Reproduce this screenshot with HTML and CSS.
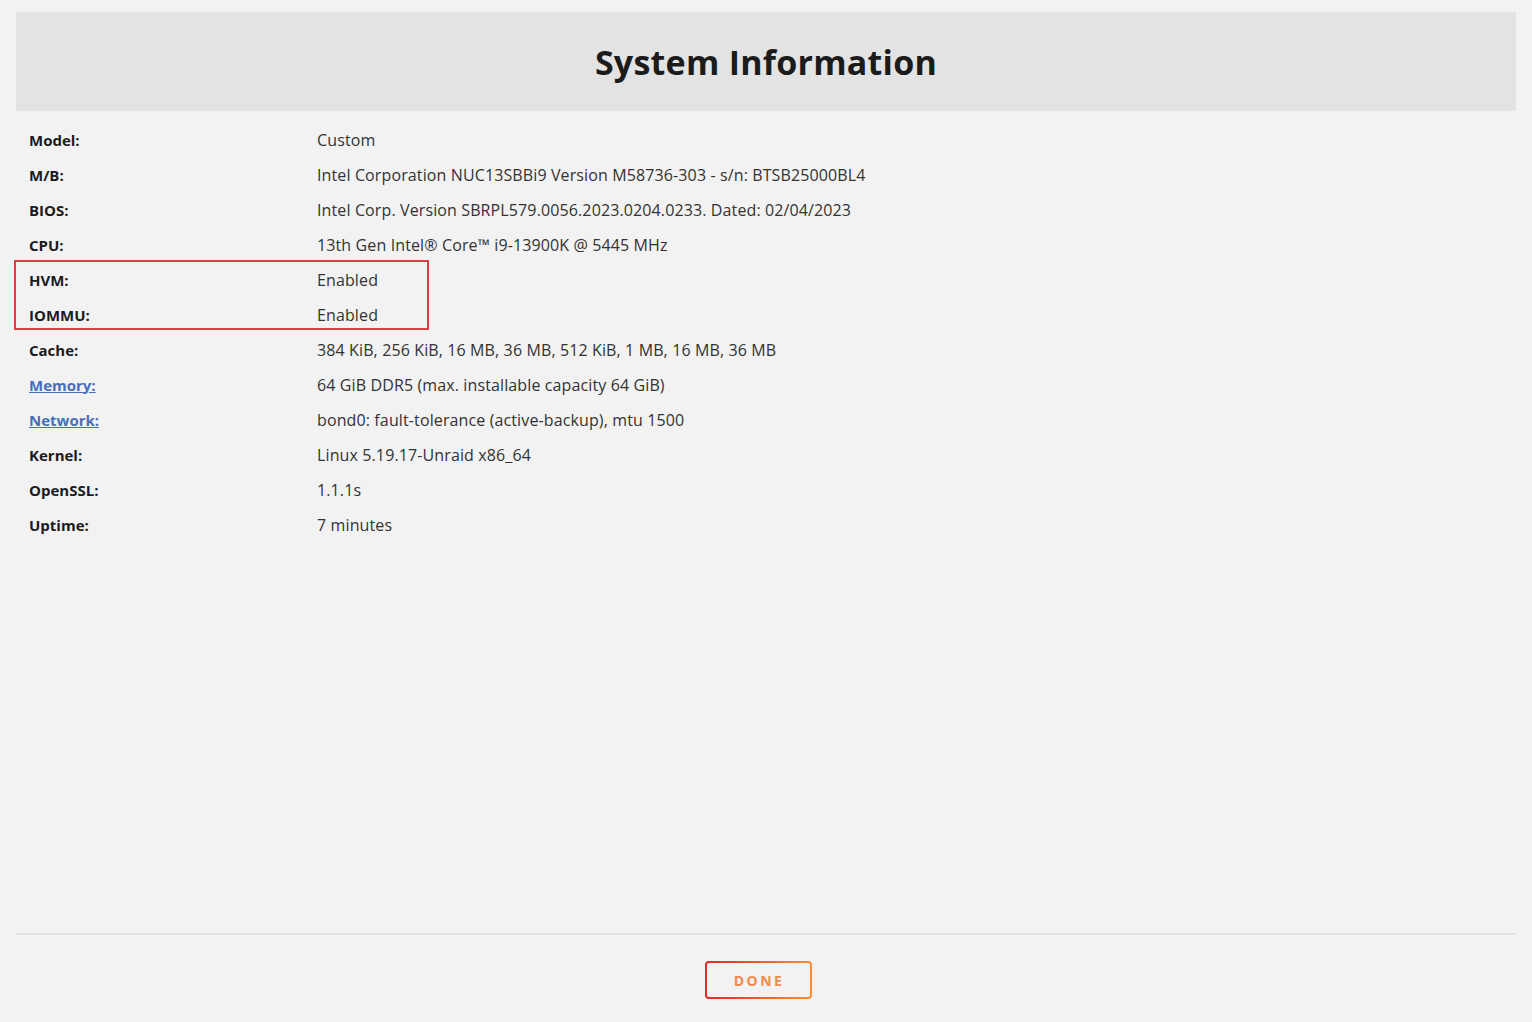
FILE: index.html
```html
<!DOCTYPE html>
<html>
<head>
<meta charset="utf-8">
<link rel="stylesheet" href="styles.css">
</head>
<body>
<div class="page">
  <header class="title-bar"><h1>System Information</h1></header>
  <main class="content">
    <div class="info">
      <div class="row"><span class="label">Model:</span><span class="value">Custom</span></div>
      <div class="row"><span class="label">M/B:</span><span class="value">Intel Corporation NUC13SBBi9 Version M58736-303 - s/n: BTSB25000BL4</span></div>
      <div class="row"><span class="label">BIOS:</span><span class="value">Intel Corp. Version SBRPL579.0056.2023.0204.0233. Dated: 02/04/2023</span></div>
      <div class="row"><span class="label">CPU:</span><span class="value">13th Gen Intel® Core™ i9-13900K @ 5445 MHz</span></div>
      <div class="highlight-group">
        <div class="row"><span class="label">HVM:</span><span class="value">Enabled</span></div>
        <div class="row"><span class="label">IOMMU:</span><span class="value">Enabled</span></div>
        <div class="highlight-box"></div>
      </div>
      <div class="row"><span class="label">Cache:</span><span class="value">384 KiB, 256 KiB, 16 MB, 36 MB, 512 KiB, 1 MB, 16 MB, 36 MB</span></div>
      <div class="row"><a class="label link" href="#">Memory:</a><span class="value">64 GiB DDR5 (max. installable capacity 64 GiB)</span></div>
      <div class="row"><a class="label link" href="#">Network:</a><span class="value">bond0: fault-tolerance (active-backup), mtu 1500</span></div>
      <div class="row"><span class="label">Kernel:</span><span class="value">Linux 5.19.17-Unraid x86_64</span></div>
      <div class="row"><span class="label">OpenSSL:</span><span class="value">1.1.1s</span></div>
      <div class="row"><span class="label">Uptime:</span><span class="value">7 minutes</span></div>
    </div>
  </main>
  <footer class="footer">
    <button class="done">DONE</button>
  </footer>
</div>
</body>
</html>
```
FILE: styles.css
```css
html, body {
  margin: 0;
  padding: 0;
  background: #f2f2f2;
}
body {
  font-family: "Open Sans", "Liberation Sans", sans-serif;
  color: #1c1b1b;
}
.page {
  height: 1022px;
  padding: 12px 16px 0;
  box-sizing: border-box;
  display: flex;
  flex-direction: column;
}
.title-bar {
  background: #e3e3e3;
  height: 99px;
  display: flex;
  align-items: center;
  justify-content: center;
}
.title-bar h1 {
  margin: 0;
  font-family: "Open Sans", sans-serif;
  font-size: 34px;
  font-weight: 700;
  color: #1c1b1b;
  letter-spacing: 0.25px;
}
.content {
  flex: 1;
  padding: 11px 0 0 13px;
}
.row {
  display: flex;
  height: 35px;
  align-items: center;
  font-size: 15px;
}
.label {
  width: 288px;
  flex: none;
  font-weight: 700;
  color: #1c1b1b;
}
.link {
  color: #486dba;
  text-decoration: underline;
}
.value {
  color: #333333;
  font-weight: 400;
  font-size: 16px;
  letter-spacing: 0.12px;
}
.highlight-group {
  position: relative;
}
.highlight-box {
  position: absolute;
  left: -15px;
  top: -2px;
  width: 411px;
  height: 66px;
  border: 2px solid #dc3d43;
}
.footer {
  border-top: 2px solid #e2e2e2;
  height: 89px;
  display: flex;
  justify-content: center;
  padding: 26px 16px 0 0;
  box-sizing: border-box;
}
.done {
  width: 107px;
  height: 38px;
  border: 2px solid transparent;
  border-radius: 4px;
  background:
    linear-gradient(#f2f2f2, #f2f2f2) padding-box,
    linear-gradient(90deg, #e22828, #ff8c2f) border-box;
  font-family: "Open Sans", sans-serif;
  font-weight: 700;
  font-size: 14px;
  letter-spacing: 2.5px;
  color: #f08a4b;
  padding: 0 0 0 2px;
}
```
